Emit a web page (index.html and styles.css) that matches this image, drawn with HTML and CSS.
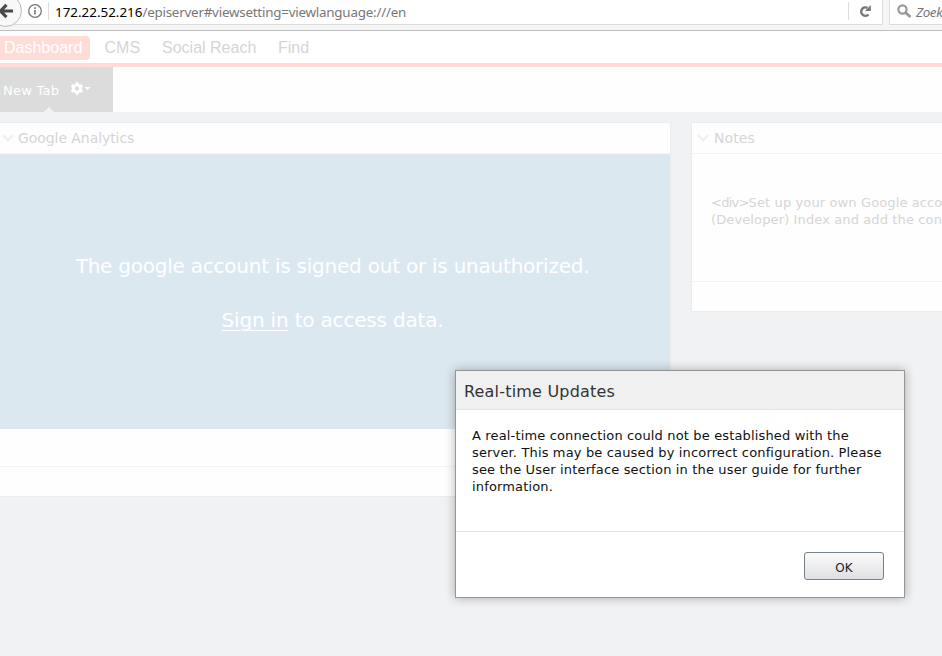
FILE: index.html
```
<!DOCTYPE html>
<html lang="en">
<head>
<meta charset="utf-8">
<title>Dashboard</title>
<link rel="stylesheet" href="styles.css">
</head>
<body>
<header class="browser">
  <div class="address">
    <svg class="back" width="23" height="29" viewBox="0 0 23 29"><circle cx="5.5" cy="10.5" r="16" fill="#f8f8f8" stroke="#bcbcbc"/><path d="M13 11H1M6.500 4.800L.5 11l6 6.200" fill="none" stroke="#494949" stroke-width="3.200"/></svg>
    <svg class="info" width="14" height="14" viewBox="0 0 14 14"><circle cx="7" cy="7" r="6.300" fill="none" stroke="#777" stroke-width="1.300"/><path d="M7 6v4.500M7 3.200v1.700" stroke="#777" stroke-width="1.600"/></svg>
    <span class="divider"></span>
    <span class="url"><b>172.22.52.216</b>/episerver#viewsetting=viewlanguage:///en</span>
    <span class="divider reload-divider"></span>
    <svg class="reload" width="14" height="14" viewBox="0 0 14 14"><path d="M9.500 9.500A4.200 4.200 0 1 1 8.500 2.900" fill="none" stroke="#777" stroke-width="2.400"/><path d="M11.800 0V6H6z" fill="#777"/></svg>
  </div>
  <div class="search">
    <svg width="15" height="15" viewBox="0 0 15 15"><circle cx="5.500" cy="5.500" r="4.100" fill="none" stroke="#999" stroke-width="2.200"/><path d="M8.500 8.500l5 4.500" stroke="#999" stroke-width="2.800"/></svg>
    <span>Zoek</span>
  </div>
</header>
<nav class="menu">
  <a class="active">Dashboard</a><a class="m2">CMS</a><a class="m3">Social Reach</a><a>Find</a>
</nav>
<div class="tabs">
  <div class="tab"><span class="tab-name">New Tab</span>
    <svg width="21" height="14" viewBox="0 0 21 14"><g fill="none" stroke="#fff"><circle cx="7" cy="6.500" r="3.500" stroke-width="2.700"/><path d="M7 .3v2.500M7 10.200v2.500M1.600 3.400l2 1.200M10.400 8.400l2 1.200M1.600 9.600l2-1.200M10.400 4.600l2-1.200" stroke-width="3"/></g><path d="M14.500 5h6l-3 3z" fill="#fff"/></svg>
    <span class="notch"></span>
  </div>
</div>
<main class="board">
  <section class="widget analytics">
    <h2><svg width="12" height="8" viewBox="0 0 12 8"><path d="M1 1l5 5.500L11 1" fill="none" stroke="#efefef" stroke-width="2"/></svg><span>Google Analytics</span></h2>
    <div class="notice"><p>The google account is signed out or is unauthorized.</p><p class="sign-in"><u>Sign in</u> to access data.</p></div>
    <div class="blank"></div>
    <div class="foot"></div>
  </section>
  <section class="widget notes">
    <h2><svg width="12" height="8" viewBox="0 0 12 8"><path d="M1 1l5 5.500L11 1" fill="none" stroke="#efefef" stroke-width="2"/></svg><span>Notes</span></h2>
    <div class="note"><span class="tag">&lt;div&gt;</span>Set up your own Google acco<br>(Developer) Index and add the con</div>
    <div class="foot"></div>
  </section>
</main>
<div class="dialog" role="dialog">
  <h1>Real-time Updates</h1>
  <div class="message">A real-time connection could not be established with the<br>server. This may be caused by incorrect configuration. Please<br>see the User interface section in the user guide for further<br>information.</div>
  <div class="actions"><button>OK</button></div>
</div>
</body>
</html>
```
FILE: styles.css
```
* { box-sizing: border-box; }
body {
  margin: 0;
  width: 942px;
  height: 656px;
  overflow: hidden;
  background: #f1f2f4;
  font-family: Verdana, "DejaVu Sans", sans-serif;
  white-space: nowrap;
}
svg { display: block; flex: none; }
h1, h2, p { margin: 0; font-weight: normal; }

.browser {
  display: flex;
  gap: 6px;
  height: 31px;
  background: #f5f5f5;
  border-bottom: 1px solid #bfbfbf;
  font: 13.4px "Noto Sans", sans-serif;
}
.address {
  display: flex;
  flex: none;
  width: 883px;
  height: 25px;
  background: #fff;
  border-right: 1px solid #ddd;
  border-bottom: 1px solid #ddd;
}
.info { margin: 4px 0 0 5px; }
.divider { flex: none; width: 1px; height: 18px; margin: 2px 0 0 6px; background: #ddd; }
.url {
  width: 793px;
  margin-left: 6px;
  line-height: 25px;
  letter-spacing: -.23px;
  color: #777;
}
.url b { font-weight: normal; letter-spacing: 0; color: #000; }
.reload-divider { margin-left: 0; }
.reload { margin: 5px 0 0 10px; }
.search {
  display: flex;
  flex: 1;
  gap: 4px;
  height: 25px;
  padding: 4px 0 0 7px;
  min-width: 0;
  background: #fff;
  border: 1px solid #ddd;
  border-width: 0 0 1px 1px;
  color: #777;
  font-style: italic;
  line-height: 17px;
  letter-spacing: -.4px;
}

.menu {
  display: flex;
  height: 36px;
  padding-top: 5px;
  background: #fff;
  border-bottom: 4px solid #ffdcd6;
  font: 16px/24px "Liberation Sans", sans-serif;
  color: #d5d5d5;
}
.active {
  width: 90px;
  height: 24px;
  padding-left: 4px;
  margin-right: 14.500px;
  border-radius: 0 4px 4px 0;
  background: #ffdcd6;
  color: #fff;
}
.m2 { width: 57.500px; }
.m3 { width: 116px; }

.tabs { height: 45px; background: #fefefe; }
.tab {
  position: relative;
  display: flex;
  width: 113px;
  height: 45px;
  padding: 15px 0 0 3px;
  background: #dcdcdc;
  color: #fff;
  font-size: 13px;
  line-height: 18px;
  letter-spacing: .25px;
}
.tab-name { width: 67px; }
.notch {
  position: absolute;
  left: 44px;
  bottom: 0;
  border: 5px solid transparent;
  border-top: 0;
  border-bottom-color: #f1f2f4;
}

.board { display: flex; align-items: flex-start; gap: 20px; padding-top: 10px; }
.widget { background: #fefefe; border: 1px solid #ebecee; border-left: 0; color: #d5d5d5; }
.widget h2 {
  display: flex;
  align-items: center;
  gap: 4px;
  height: 31px;
  padding: 0 0 0 2px;
  border-bottom: 1px solid #f3f4f5;
  font-size: 14px;
  letter-spacing: -.07px;
}
.analytics { width: 671px; height: 375px; flex: none; }
.notice {
  height: 275px;
  padding-top: 99px;
  background: #dce8f0;
  color: #fff;
  font-size: 20px;
  line-height: 27px;
  letter-spacing: -.23px;
  text-align: center;
}
.notice p { margin-bottom: 27px; padding-right: 5px; }
.notice .sign-in { letter-spacing: -.19px; }
.notice u { text-underline-offset: 3px; text-decoration-thickness: 1px; }
.blank { height: 38px; border-bottom: 1px solid #f3f4f5; }
.notes { flex: none; width: 251px; height: 190px; border-left: 1px solid #ebecee; border-right: 0; }
.notes h2 { padding-left: 5px; gap: 5px; letter-spacing: .1px; }
.note {
  height: 128px;
  padding: 40px 0 0 19px;
  border-bottom: 1px solid #f3f4f5;
  font-size: 13px;
  line-height: 17px;
  letter-spacing: .12px;
}
.tag { letter-spacing: -.75px; }

.dialog {
  position: absolute;
  left: 455px;
  top: 370px;
  width: 450px;
  height: 228px;
  background: #fff;
  border: 1px solid #959595;
  box-shadow: 0 0 10px rgba(0, 0, 0, .3);
}
.dialog h1 {
  height: 39px;
  padding-left: 8px;
  background: #f0f0f0;
  border-bottom: 1px solid #e2e2e2;
  font-size: 16px;
  line-height: 42px;
  letter-spacing: .19px;
  color: #333;
}
.message {
  height: 122px;
  padding: 17px 16px 0;
  border-bottom: 1px solid #e2e2e2;
  font-size: 13px;
  line-height: 17px;
  letter-spacing: .15px;
  color: #111;
}
.actions { display: flex; justify-content: flex-end; padding: 20px 20px 0; }
.actions button {
  width: 80px;
  height: 28px;
  padding: 3px 0 0;
  border: 1px solid #74808a;
  border-radius: 3px;
  background: linear-gradient(#fafafa, #dfe0e3);
  font: 12px Verdana, "DejaVu Sans", sans-serif;
  color: #222;
}
```
